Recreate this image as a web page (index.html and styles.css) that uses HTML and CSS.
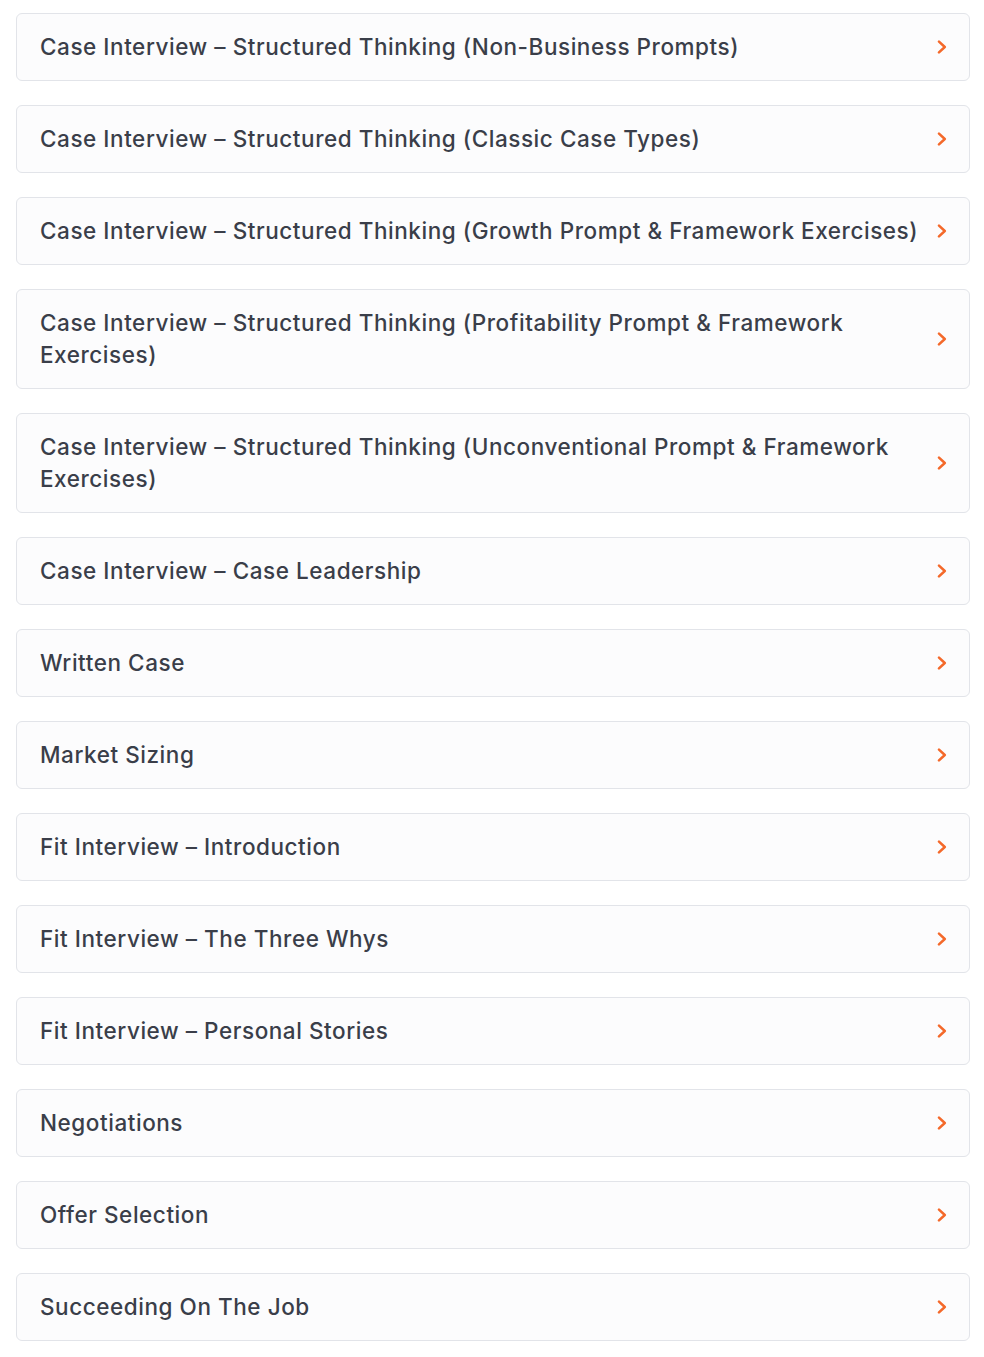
FILE: index.html
```html
<!DOCTYPE html>
<html lang="en">
<head>
<meta charset="utf-8">
<title>Modules</title>
<link rel="stylesheet" href="styles.css">
</head>
<body>
<ul class="module-list">
  <li class="module"><span class="module-title">Case Interview – Structured Thinking (Non-Business Prompts)</span><svg class="chev" viewBox="0 0 10 14" width="10" height="14"><path d="M2 1.6 L7.8 7 L2 12.4"/></svg></li>
  <li class="module"><span class="module-title">Case Interview – Structured Thinking (Classic Case Types)</span><svg class="chev" viewBox="0 0 10 14" width="10" height="14"><path d="M2 1.6 L7.8 7 L2 12.4"/></svg></li>
  <li class="module"><span class="module-title">Case Interview – Structured Thinking (Growth Prompt &amp; Framework Exercises)</span><svg class="chev" viewBox="0 0 10 14" width="10" height="14"><path d="M2 1.6 L7.8 7 L2 12.4"/></svg></li>
  <li class="module"><span class="module-title">Case Interview – Structured Thinking (Profitability Prompt &amp; Framework Exercises)</span><svg class="chev" viewBox="0 0 10 14" width="10" height="14"><path d="M2 1.6 L7.8 7 L2 12.4"/></svg></li>
  <li class="module"><span class="module-title">Case Interview – Structured Thinking (Unconventional Prompt &amp; Framework Exercises)</span><svg class="chev" viewBox="0 0 10 14" width="10" height="14"><path d="M2 1.6 L7.8 7 L2 12.4"/></svg></li>
  <li class="module"><span class="module-title">Case Interview – Case Leadership</span><svg class="chev" viewBox="0 0 10 14" width="10" height="14"><path d="M2 1.6 L7.8 7 L2 12.4"/></svg></li>
  <li class="module"><span class="module-title">Written Case</span><svg class="chev" viewBox="0 0 10 14" width="10" height="14"><path d="M2 1.6 L7.8 7 L2 12.4"/></svg></li>
  <li class="module"><span class="module-title">Market Sizing</span><svg class="chev" viewBox="0 0 10 14" width="10" height="14"><path d="M2 1.6 L7.8 7 L2 12.4"/></svg></li>
  <li class="module"><span class="module-title">Fit Interview – Introduction</span><svg class="chev" viewBox="0 0 10 14" width="10" height="14"><path d="M2 1.6 L7.8 7 L2 12.4"/></svg></li>
  <li class="module"><span class="module-title">Fit Interview – The Three Whys</span><svg class="chev" viewBox="0 0 10 14" width="10" height="14"><path d="M2 1.6 L7.8 7 L2 12.4"/></svg></li>
  <li class="module"><span class="module-title">Fit Interview – Personal Stories</span><svg class="chev" viewBox="0 0 10 14" width="10" height="14"><path d="M2 1.6 L7.8 7 L2 12.4"/></svg></li>
  <li class="module"><span class="module-title">Negotiations</span><svg class="chev" viewBox="0 0 10 14" width="10" height="14"><path d="M2 1.6 L7.8 7 L2 12.4"/></svg></li>
  <li class="module"><span class="module-title">Offer Selection</span><svg class="chev" viewBox="0 0 10 14" width="10" height="14"><path d="M2 1.6 L7.8 7 L2 12.4"/></svg></li>
  <li class="module"><span class="module-title">Succeeding On The Job</span><svg class="chev" viewBox="0 0 10 14" width="10" height="14"><path d="M2 1.6 L7.8 7 L2 12.4"/></svg></li>
</ul>
</body>
</html>
```
FILE: styles.css
```css
html, body {
  margin: 0;
  padding: 0;
  background: #ffffff;
}
.module-list {
  list-style: none;
  margin: 0;
  padding: 13px 14px 0 16px;
  display: flex;
  flex-direction: column;
  gap: 24px;
  font-family: "Inter", "Noto Sans", sans-serif;
}
.module {
  display: flex;
  align-items: center;
  justify-content: space-between;
  gap: 10px;
  padding: 17px 22px 17px 23px;
  border: 1px solid #e2e4e9;
  border-radius: 6px;
  background: #fcfcfd;
}
.module-title {
  flex: 1 1 auto;
  font-size: 22.5px;
  font-weight: 500;
  line-height: 32px;
  color: #3a3e49;
  letter-spacing: 0.55px;
}
.chev {
  flex: 0 0 auto;
  display: block;
  fill: none;
  stroke: #f4692a;
  stroke-width: 2.5;
  stroke-linecap: round;
  stroke-linejoin: round;
}
```
